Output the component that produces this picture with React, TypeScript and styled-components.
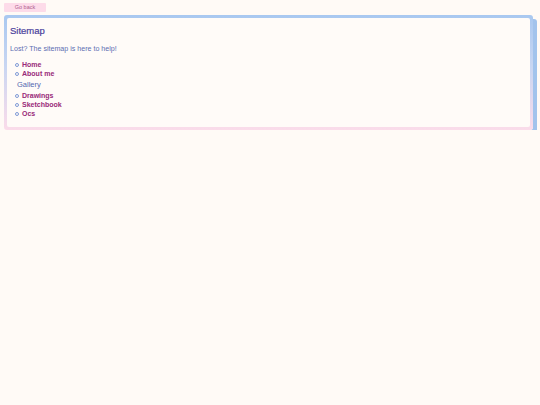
import styled, { createGlobalStyle } from "styled-components";

const GlobalStyle = createGlobalStyle`
  body {
    margin: 0;
    background-color: #fffaf6;
    font-family: "Liberation Sans", "DejaVu Sans", sans-serif;
  }
`;

type Link = { label: string };
type Section = { heading?: string; links: Link[] };

const sections: Section[] = [
  { links: [{ label: "Home" }, { label: "About me" }] },
  {
    heading: "Gallery",
    links: [{ label: "Drawings" }, { label: "Sketchbook" }, { label: "Ocs" }],
  },
];

const Page = styled.div`
  padding: 3px 3px 0 4px;
`;

const BackButton = styled.button`
  display: block;
  width: 42px;
  height: 9px;
  padding: 0;
  border: none;
  border-radius: 1px;
  background-color: #fddbe9;
  color: #b0608e;
  font-family: "Liberation Sans", sans-serif;
  font-size: 5.5px;
  line-height: 9px;
  cursor: pointer;
`;

const Frame = styled.div`
  margin-top: 3px;
  width: 529px;
  padding: 3px;
  box-sizing: border-box;
  border-radius: 3px;
  background: linear-gradient(180deg, #a9c8f0 0%, #c9d6f2 45%, #fbdcea 100%);
  box-shadow: 4px 4px 0 #a2c3ec;
`;

const Panel = styled.div`
  background-color: #fffbf8;
  border-radius: 2px;
  padding: 6px 6px 9px 3px;
`;

const Title = styled.h1`
  margin: 0;
  font-size: 9.5px;
  font-weight: normal;
  color: #4a3f9c;
  line-height: 14px;
  -webkit-text-stroke: 0.2px #4a3f9c;
`;

const Intro = styled.p`
  margin: 7px 0 6px;
  font-size: 7.1px;
  color: #5d6db2;
  line-height: 9px;
`;

const List = styled.ul`
  margin: 0;
  padding: 0 0 0 5px;
  list-style: none;
`;

const Heading = styled.li`
  font-size: 7.5px;
  color: #5468b0;
  line-height: 10px;
  padding: 2px 0 1px 2px;
`;

const Item = styled.li`
  display: flex;
  align-items: center;
  gap: 3px;
  height: 9px;
`;

const Bullet = styled.span`
  width: 2px;
  height: 2px;
  border: 1px solid #7f9ad6;
  border-radius: 50%;
`;

const NavLink = styled.a`
  font-size: 7px;
  font-weight: bold;
  color: #992a78;
  text-decoration: none;
`;

function App() {
  return (
    <>
      <GlobalStyle />
      <Page>
        <BackButton>Go back</BackButton>
        <Frame>
          <Panel>
            <Title>Sitemap</Title>
            <Intro>Lost? The sitemap is here to help!</Intro>
            <List>
              {sections.map((s, i) => (
                <div key={i}>
                  {s.heading && <Heading>{s.heading}</Heading>}
                  {s.links.map((l) => (
                    <Item key={l.label}>
                      <Bullet />
                      <NavLink href="#">{l.label}</NavLink>
                    </Item>
                  ))}
                </div>
              ))}
            </List>
          </Panel>
        </Frame>
      </Page>
    </>
  );
}

export default App;
